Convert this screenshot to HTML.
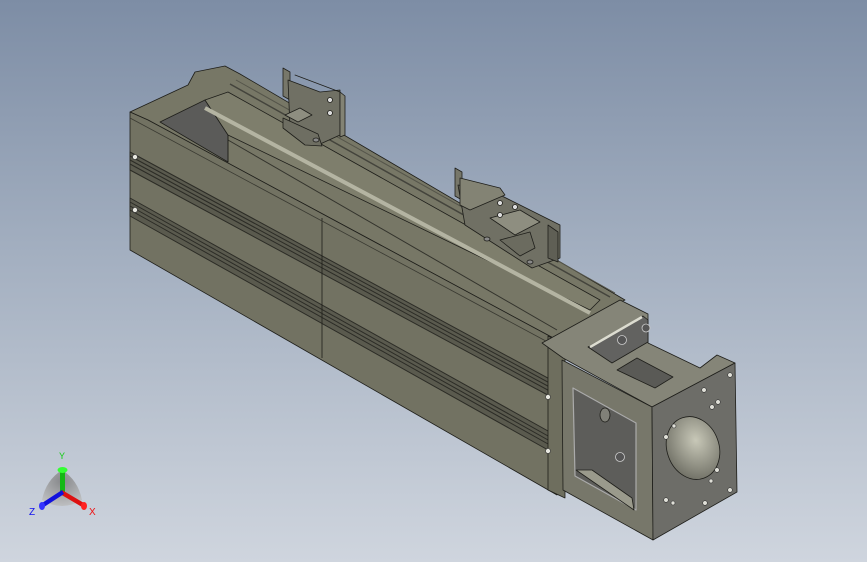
<!DOCTYPE html>
<html><head><meta charset="utf-8"><style>
html,body{margin:0;padding:0;width:867px;height:562px;overflow:hidden}
body{background:linear-gradient(180deg,#7d8da5 0%,#a3afc0 45%,#cfd5de 100%);font-family:"Liberation Sans",sans-serif}
svg{position:absolute;left:0;top:0}
</style></head><body>
<svg width="867" height="562" viewBox="0 0 867 562" stroke="#1e1e1a" stroke-width="0.8" stroke-linejoin="round">
<defs>
<radialGradient id="bore" cx="0.6" cy="0.4" r="0.7"><stop offset="0" stop-color="#c8c8b8"/><stop offset="1" stop-color="#6a6a60"/></radialGradient>
<radialGradient id="tri" cx="0.5" cy="0.3" r="0.7"><stop offset="0" stop-color="#777"/><stop offset="1" stop-color="#bbb"/></radialGradient>
</defs>
<!-- top surface of body -->
<polygon points="130,112 188,85 195,72 225,66 240,74 625,300 600,312 557,340 148,120" fill="#777766"/>
<!-- cavity -->
<polygon points="160,122 205,100 228,135 228,162" fill="#5b5b59"/>
<polygon points="205,100 228,92 600,300 590,310 228,135" fill="#7e7e6c"/>
<line x1="205" y1="108" x2="590" y2="313" stroke="#b4b4a2" stroke-width="4"/>
<line x1="230" y1="84" x2="610" y2="297" stroke="#44443c" stroke-width="1.5"/>
<line x1="236" y1="80" x2="615" y2="293" stroke="#55554a" stroke-width="1"/>
<line x1="228" y1="140" x2="557" y2="330" stroke="#33332c" stroke-width="1"/>
<line x1="228" y1="135" x2="228" y2="162"/>
<!-- front long face -->
<polygon points="130,112 148,120 557,340 557,495 130,250" fill="#727262"/>
<!-- groove bands -->
<g stroke="#2c2c26" stroke-width="1">
<polygon points="130,152 557,383 557,400 130,170" fill="#5a5a4e"/>
<line x1="130" y1="156" x2="557" y2="387"/><line x1="130" y1="160" x2="557" y2="391"/><line x1="130" y1="164" x2="557" y2="395"/>
<polygon points="130,198 557,436 557,455 130,216" fill="#5a5a4e"/>
<line x1="130" y1="202" x2="557" y2="441"/><line x1="130" y1="206" x2="557" y2="445"/><line x1="130" y1="210" x2="557" y2="449"/>
</g>
<line x1="322" y1="218" x2="322" y2="358"/>
<line x1="130" y1="118" x2="557" y2="347" stroke="#3a3a32"/>
<!-- end plate of body -->
<polygon points="548,336 565,345 565,498 548,490" fill="#6e6e5e"/>
<g fill="#e8e8e0" stroke="#333" stroke-width="0.6">
<circle cx="135" cy="157" r="2.5"/><circle cx="135" cy="210" r="2.5"/><circle cx="548" cy="397" r="2.5"/><circle cx="548" cy="451" r="2.5"/>
</g>
<!-- sensor bracket 1 -->
<g fill="#77776a">
<polygon points="283,68 290,72 290,100 283,96"/>
<polygon points="288,80 320,92 340,90 340,135 318,145 290,128" fill="#707064"/>
<polygon points="295,75 340,92 345,96 345,135 340,137 340,92" fill="#838374"/>
<polygon points="283,118 318,134 322,146 305,145 283,128" fill="#6e6e62"/>
<polygon points="285,115 300,108 312,115 298,122" fill="#8e8e80"/>
<circle cx="330" cy="100" r="2.5" fill="#ddd"/><circle cx="330" cy="113" r="2.5" fill="#ddd"/>
<ellipse cx="316" cy="140" rx="3" ry="2" fill="#888"/>
</g>
<!-- sensor bracket 2 -->
<g fill="#77776a">
<polygon points="455,168 462,172 462,200 455,196"/>
<polygon points="458,185 490,190 510,200 560,225 560,258 532,268 465,225" fill="#707064"/>
<polygon points="460,178 500,188 505,195 470,210 460,205" fill="#838374"/>
<polygon points="490,218 520,210 540,222 515,235" fill="#8e8e80"/>
<polygon points="500,240 530,232 535,248 520,256" fill="#6b6b5f"/>
<polygon points="548,225 558,232 558,262 548,258" fill="#5f5f55"/>
<circle cx="500" cy="203" r="2.5" fill="#ddd"/><circle cx="500" cy="215" r="2.5" fill="#ddd"/><circle cx="515" cy="207" r="2.5" fill="#ddd"/>
<ellipse cx="487" cy="239" rx="3" ry="2" fill="#888"/><ellipse cx="530" cy="262" rx="3" ry="2" fill="#888"/>
</g>
<!-- motor housing -->
<polygon points="542,343 620,300 648,314 648,343 700,368 717,355 735,363 652,407 563,358" fill="#858578"/>
<polygon points="588,347 643,316 648,320 648,342 612,363" fill="#626260"/>
<line x1="590" y1="347" x2="642" y2="317" stroke="#dcdcd0" stroke-width="2.5"/>
<circle cx="622" cy="340" r="4.5" fill="#555" stroke="#ccc"/><circle cx="646" cy="328" r="4" fill="#555" stroke="#ccc"/>
<polygon points="617,370 637,358 673,377 655,388" fill="#5a5a56"/>
<polygon points="562,360 652,407 653,540 563,490" fill="#77776a"/>
<polygon points="573,388 636,423 636,510 575,476" fill="#5d5d5a" stroke="#aaa" stroke-width="1.2"/>
<polygon points="576,470 592,470 632,498 634,510" fill="#9a9a8c"/>
<circle cx="620" cy="457" r="4.5" fill="#555" stroke="#ccc"/>
<ellipse cx="605" cy="415" rx="5" ry="7" fill="#808078"/>
<polygon points="652,407 735,363 737,492 653,540" fill="#6d6d68"/>
<ellipse cx="693" cy="448" rx="26" ry="32" transform="rotate(-20 693 448)" fill="url(#bore)"/>
<g fill="#e0e0d8" stroke="#333" stroke-width="0.6">
<circle cx="730" cy="375" r="2.3"/><circle cx="704" cy="390" r="2.3"/><circle cx="712" cy="407" r="2.3"/><circle cx="718" cy="402" r="2.3"/>
<circle cx="674" cy="426" r="2"/><circle cx="666" cy="437" r="2.3"/><circle cx="717" cy="470" r="2.3"/><circle cx="711" cy="481" r="2"/>
<circle cx="730" cy="490" r="2.3"/><circle cx="666" cy="500" r="2.3"/><circle cx="673" cy="503" r="2"/><circle cx="705" cy="503" r="2.3"/>
</g>
<!-- triad -->
<g stroke="none">
<path d="M62,470 Q78,480 82,500 Q62,512 42,500 Q46,480 62,470Z" fill="url(#tri)" opacity="0.8"/>
<rect x="60" y="468" width="5" height="24" fill="#14b814"/>
<ellipse cx="62.5" cy="470" rx="5" ry="3" fill="#3f3"/>
<polygon points="62,490 84,503 82,507 60,494" fill="#d11"/>
<ellipse cx="84" cy="506" rx="3" ry="4" fill="#f22"/>
<polygon points="62,490 42,503 44,507 64,494" fill="#11d"/>
<ellipse cx="42" cy="506" rx="3" ry="4" fill="#33f"/>
</g>
<text x="59" y="459" font-size="9" fill="#1c1" stroke="none" font-family="Liberation Sans">Y</text>
<text x="89" y="515" font-size="10" fill="#e11" stroke="none" font-family="Liberation Sans">X</text>
<text x="29" y="515" font-size="10" fill="#11e" stroke="none" font-family="Liberation Sans">Z</text>
</svg>
</body></html>
